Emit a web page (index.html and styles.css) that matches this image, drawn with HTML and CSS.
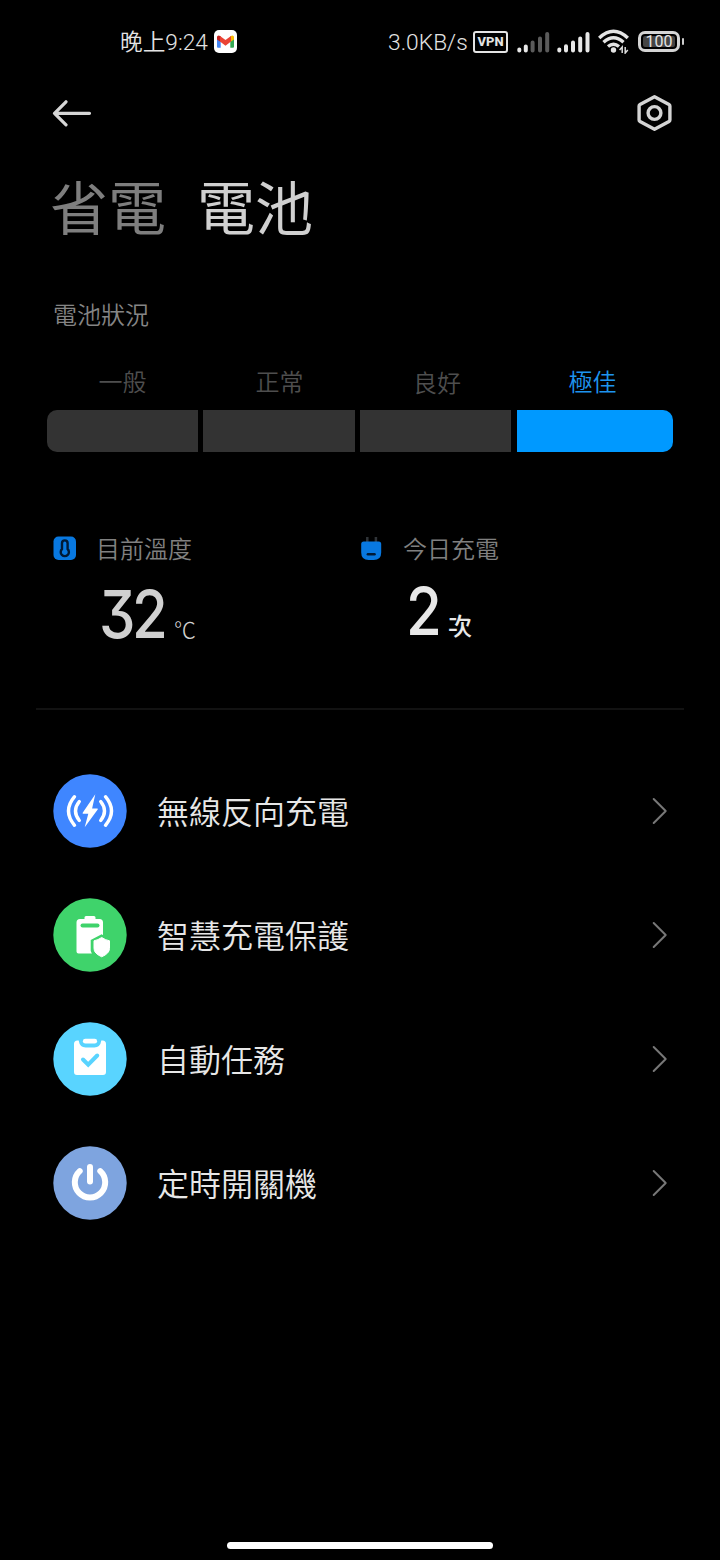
FILE: index.html
```html
<!DOCTYPE html>
<html lang="zh-Hant">
<head>
<meta charset="utf-8">
<title>電池</title>
<link rel="stylesheet" href="styles.css">
</head>
<body>
<div class="screen">
  <header class="status">
    <span class="clock">晚上9:24</span>
    <svg class="gmail" width="23" height="23" viewBox="0 0 23 23">
      <rect width="23" height="23" rx="5" fill="#fff"/>
      <path d="M3 7v9.800q0 1 1 1h2.700V9.800z" fill="#4285f4"/>
      <path d="M20 7v9.800q0 1-1 1h-2.700V9.800z" fill="#34a853"/>
      <path d="M3 9.400V7.100q0-1.700 1.700-1.700l2 .9v5.700z" fill="#c5221f"/>
      <path d="M20 9.400V7.100q0-1.700-1.700-1.700l-2 .9v5.700z" fill="#fbbc04"/>
      <path d="M6 5.900l5.500 4.200L17 5.900v5.600l-5.500 4.200L6 11.500z" fill="#ea4335"/>
    </svg>
    <span class="speed">3.0KB/s</span>
    <span class="vpn">VPN</span>
    <svg class="signal" width="33" height="22" viewBox="0 0 33 22">
      <path d="M2.300 19.500v-1M8.800 19.500v-4" class="bar-on"/>
      <path d="M15.600 19.500v-8M23 19.500V7.600M30.200 19.500V3" class="bar-off"/>
    </svg>
    <svg class="signal2" width="33" height="22" viewBox="0 0 33 22">
      <path d="M2.300 19.500v-1M9 19.500v-4.200M16 19.500v-8M23.200 19.500V7.600M30.500 19.500V3" class="bar-on"/>
    </svg>
    <svg class="wifi" width="32" height="25" viewBox="0 0 32 25">
      <g fill="none" stroke="#e4e4e4" stroke-width="3.400">
        <path d="M1.200 8.900Q15.500-4.500 29.800 8.900"/>
        <path d="M5.500 13.300q10-9 20 0"/>
        <path d="M10 17.500q5.500-4.600 11 0"/>
      </g>
      <circle cx="15.500" cy="21" r="2.700" fill="#e4e4e4"/>
      <path d="M24.200 24v-6l-2.600 3M27.200 18v6l2.600-3" fill="none" stroke="#ddd" stroke-width="1.500"/>
    </svg>
    <span class="battery"><span class="charge">100</span></span>
    <span class="tip"></span>
  </header>

  <nav class="toolbar">
    <svg width="40" height="28" viewBox="0 0 40 28">
      <path d="M14 2.800L2.500 14.300 14 25.800M2.500 14.300H37.500" fill="none" stroke="#d6d6d6" stroke-width="3.200" stroke-linecap="round" stroke-linejoin="round"/>
    </svg>
    <svg width="36" height="38" viewBox="0 0 36 38">
      <path d="M17.500 2.700L32 10.500q.9.500.9 1.500v14q0 1-.9 1.500L17.500 35.300 3 27.500q-.9-.5-.9-1.500V12q0-1 .9-1.500z" fill="none" stroke="#d4d4d4" stroke-width="3.400" stroke-linejoin="round"/>
      <circle cx="17.500" cy="19" r="6.400" fill="none" stroke="#d4d4d4" stroke-width="3.400"/>
    </svg>
  </nav>

  <div class="tabs"><span class="tab">省電</span><span class="tab active">電池</span></div>

  <h2 class="section">電池狀況</h2>
  <div class="levels"><span>一般</span><span>正常</span><span class="good">良好</span><span class="best">極佳</span></div>
  <div class="meter"><i></i><i></i><i></i><i class="on"></i></div>

  <section class="stats">
    <div class="stat">
      <svg width="24" height="26" viewBox="0 0 24 26">
        <rect x="1.500" y="1.500" width="22.500" height="23.500" rx="5" fill="#0878e0"/>
        <path d="M10 14V8.200a2.800 2.800 0 0 1 5.600 0V14a4.100 4.100 0 1 1-5.600 0z" fill="none" stroke="#001a36" stroke-width="2.400"/>
      </svg>
      <div class="info">
        <div class="label">目前溫度</div>
        <div class="value"><span class="num temp">32</span><span class="unit degree">℃</span></div>
      </div>
    </div>
    <div class="stat">
      <svg width="24" height="26" viewBox="0 0 24 26">
        <path d="M8.300 2v5M16.900 2v5" stroke="#303438" stroke-width="2.500"/>
        <path d="M2.200 9q0-2.500 2.500-2.500h15q2.500 0 2.500 2.500v8.500q0 7.500-7.500 7.500h-5q-7.500 0-7.500-7.500z" fill="#0878e0"/>
        <path d="M8.900 19.200h6.600" stroke="#001a36" stroke-width="2.600" stroke-linecap="round"/>
      </svg>
      <div class="info">
        <div class="label">今日充電</div>
        <div class="value count"><span class="num single">2</span><span class="unit times">次</span></div>
      </div>
    </div>
  </section>

  <ul class="menu">
    <li>
      <svg width="74" height="74" viewBox="0 0 74 74">
        <circle cx="37" cy="37" r="36.700" fill="#3f86ff"/>
        <path d="M42.300 20.300L29.700 38.700q-.6 1.100.6 1.100h5l-3.600 13.400L44.700 35.500q.6-1.100-.6-1.100h-5z" fill="#fff"/>
        <g fill="none" stroke="#fff" stroke-width="3.400" stroke-linecap="round">
          <path d="M21.500 22.700Q9.500 37 21.500 51.300M26.300 27.500q-7.600 9.500 0 19M52.500 22.700q12 14.300 0 28.600M47.700 27.500q7.600 9.500 0 19"/>
        </g>
      </svg>
      <span class="name">無線反向充電</span>
      <svg class="chevron" width="16" height="28" viewBox="0 0 16 28"><path d="M1.700 2L13.700 14 1.700 26"/></svg>
    </li>
    <li>
      <svg width="74" height="74" viewBox="0 0 74 74">
        <circle cx="37" cy="37" r="36.700" fill="#3fd36b"/>
        <path d="M31.500 21v-1.500q0-1.500 1.500-1.500h8q1.500 0 1.500 1.500V21h4q3.500 0 3.500 3.500v31H25.500q-2 0-2-2v-29q0-3.500 3.500-3.500z" fill="#fff"/>
        <path d="M29.500 27.500h15" stroke="#3fd36b" stroke-width="4" stroke-linecap="round"/>
        <path d="M48.700 38l8.300 4v10q-1 6.500-8.300 9.500-8-3.200-9.500-9V43z" fill="#3fd36b" stroke="#3fd36b" stroke-width="3"/>
        <path d="M48.700 39.500q3.600 2.500 7.800 3.300v7.700q0 5-7.800 8.300-7.700-3.300-7.700-8.300v-7.700q4.100-.8 7.700-3.300z" fill="#fff" stroke="#fff" stroke-linejoin="round"/>
      </svg>
      <span class="name">智慧充電保護</span>
      <svg class="chevron" width="16" height="28" viewBox="0 0 16 28"><path d="M1.700 2L13.700 14 1.700 26"/></svg>
    </li>
    <li>
      <svg width="74" height="74" viewBox="0 0 74 74">
        <circle cx="37" cy="37" r="36.700" fill="#59d4ff"/>
        <path d="M21 22q0-3.500 3.500-3.500h1.200q1 7 7 7h8.600q6 0 7-7h1.200q3.500 0 3.500 3.500v28q0 3-3 3H24q-3 0-3-3z" fill="#fff"/>
        <path d="M32.300 19.200h9.400" stroke="#fff" stroke-width="4.800" stroke-linecap="round"/>
        <path d="M30 37.500l5.200 5.200 9-9.200" fill="none" stroke="#59d4ff" stroke-width="4" stroke-linecap="round"/>
      </svg>
      <span class="name">自動任務</span>
      <svg class="chevron" width="16" height="28" viewBox="0 0 16 28"><path d="M1.700 2L13.700 14 1.700 26"/></svg>
    </li>
    <li>
      <svg width="74" height="74" viewBox="0 0 74 74">
        <circle cx="37" cy="37" r="36.700" fill="#7ea4df"/>
        <path d="M26.700 25.100a15.200 15.200 0 1 0 20.600 0M37 21v14.500" fill="none" stroke="#fff" stroke-width="6" stroke-linecap="round"/>
      </svg>
      <span class="name">定時開關機</span>
      <svg class="chevron" width="16" height="28" viewBox="0 0 16 28"><path d="M1.700 2L13.700 14 1.700 26"/></svg>
    </li>
  </ul>
  <div class="home"></div>
</div>
</body>
</html>
```
FILE: styles.css
```css
* { box-sizing: border-box; }
body { margin: 0; background: #000; font-family: Roboto, "Noto Sans CJK TC", sans-serif; font-weight: 350; }
svg { display: block; flex: none; }
.screen { width: 720px; height: 1560px; display: flex; flex-direction: column; background: #000; overflow: hidden; }

.status { height: 83px; flex: none; display: flex; align-items: center; padding-left: 120px; color: #e4e4e4; font-size: 23px; line-height: 30px; white-space: nowrap; }
.clock { width: 94px; font-size: 22.7px; padding-top: 3px; }
.speed { width: 81px; margin-left: 151px; padding-top: 2px; font-size: 22.8px; }
.vpn { width: 35px; height: 22px; margin-left: 4px; border: 2.5px solid #e4e4e4; border-radius: 3px; font-size: 13px; font-weight: 800; line-height: 18px; text-align: center; }
.signal { margin-left: 9px; }
.signal2 { margin-left: 7px; }
.wifi { margin-left: 8px; }
.bar-on, .bar-off { fill: none; stroke: #e8e8e8; stroke-width: 4; stroke-linecap: round; }
.bar-off { stroke: #5b5b5b; }
.battery { width: 42px; height: 21px; margin-left: 8px; padding: 2px; border: 3px solid #d4d4d4; border-radius: 7px; display: flex; }
.charge { flex: 1; background: #444; border-radius: 2px; font-size: 16px; font-weight: 400; line-height: 12px; text-align: center; }
.tip { width: 2px; height: 7px; margin-left: 2px; background: #ccc; border-radius: 1px; }

.toolbar { height: 60px; flex: none; display: flex; align-items: center; justify-content: space-between; padding: 0 47px 0 52px; }
.tabs { height: 130px; flex: none; display: flex; gap: 31px; padding: 1px 0 0 50px; font-size: 58px; line-height: 132px; font-weight: 400; color: #7e7e7e; }
.active { color: #d0d0d0; }
.section { height: 84px; flex: none; margin: 0; padding-left: 53px; font-size: 24px; line-height: 86px; font-weight: 350; color: #858585; }
.levels { height: 53px; flex: none; display: grid; grid-template-columns: repeat(4, 157px); padding-left: 44px; font-size: 24px; line-height: 53px; text-align: center; color: #4e4e4e; }
.levels .good { padding: 1px 0 0 1px; }
.levels .best { color: #1e94ee; margin-left: -2px; }
.meter { height: 42px; flex: none; display: grid; grid-template-columns: 151.500px 151.500px 151.500px 156.500px; gap: 5.200px; padding-left: 46.500px; }
.meter i { background: #333; }
.meter i:first-child { border-radius: 10px 0 0 10px; }
.meter i.on { background: #0099ff; border-radius: 0 10px 10px 0; }

.stats { height: 258px; flex: none; margin: 0 36px; padding: 81px 0 0 16px; display: grid; grid-template-columns: 307px 1fr; border-bottom: 2px solid #121212; }
.stat { display: flex; gap: 20px; }
.stat svg { margin-top: 2px; }
.label { font-size: 24px; line-height: 34px; color: #808080; }
.value { display: flex; align-items: baseline; height: 96px; margin-top: -1px; padding-left: 3px; line-height: 96px; color: #d0d0d0; }
.num { font-family: Inter, Roboto, sans-serif; font-size: 66px; font-weight: 500; font-feature-settings: "cv09"; transform: scaleX(.88); transform-origin: left; }
.temp { width: 68px; letter-spacing: -4px; }
.single { width: 35px; }
.unit { margin-left: 7px; font-size: 22px; }
.degree { font-weight: 300; }
.count { color: #e8e8e8; margin-top: -4px; }
.times { font-weight: 500; font-size: 24px; }

.menu { list-style: none; margin: 39px 0 0; padding: 0; }
.menu li { height: 124px; display: flex; align-items: center; padding: 0 52px 0 53px; }
.name { flex: 1; margin-left: 30px; padding-top: 4px; font-size: 32px; line-height: 48px; color: #e7e7e7; }
.chevron path { fill: none; stroke: #777; stroke-width: 2; stroke-linecap: round; stroke-linejoin: round; }
.home { width: 266px; height: 7px; margin: auto auto 11px; border-radius: 4px; background: #fff; }
```
